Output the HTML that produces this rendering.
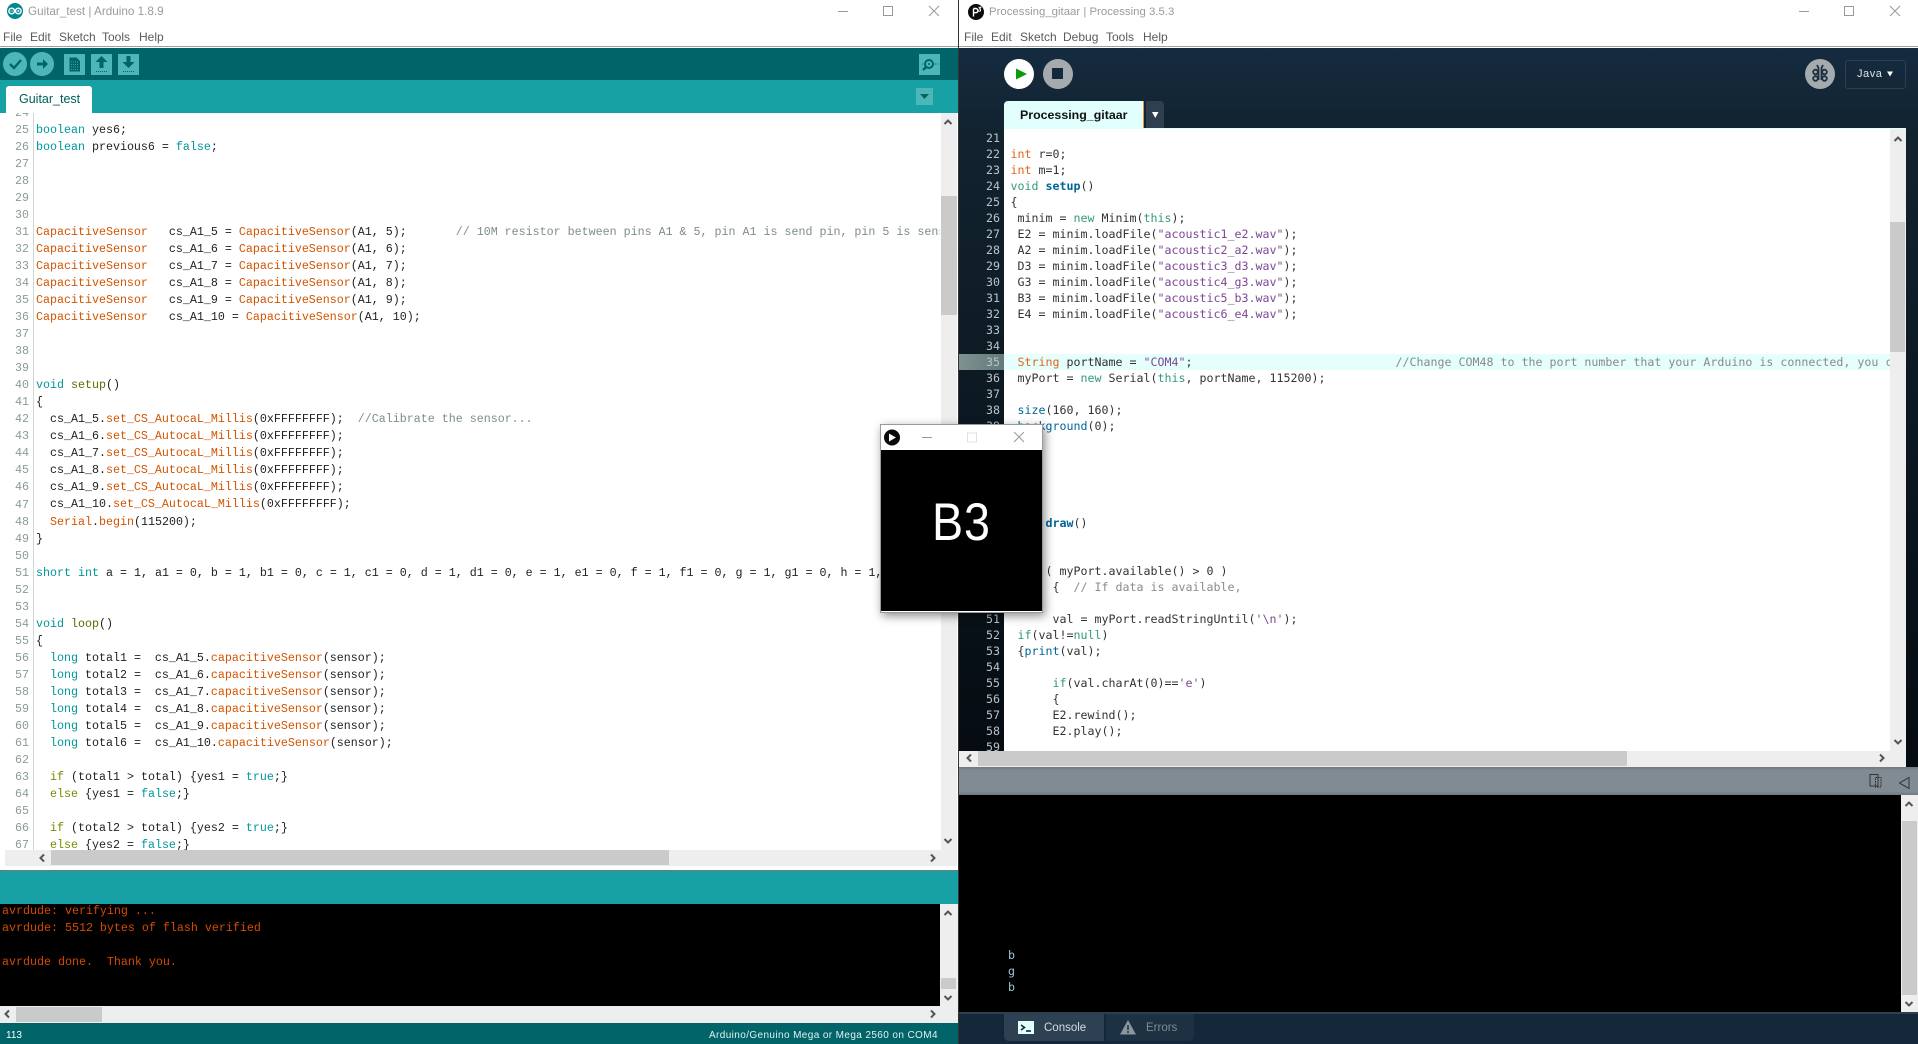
<!DOCTYPE html>
<html><head><meta charset="utf-8"><style>
html,body{margin:0;padding:0;width:1918px;height:1044px;overflow:hidden;background:#fff}
body{position:relative;font-family:"Liberation Sans",sans-serif}
div,span,pre,svg{position:absolute;margin:0}
pre span,pre{white-space:pre}
pre span{position:static}
.t{color:#9b9b9b;font-size:11.7px;top:3px;line-height:18px;white-space:nowrap}
.m{color:#5a5a5a;font-size:12px;top:28px;line-height:18px;white-space:nowrap}
.a{font:11.67px/17px "Liberation Mono",monospace;color:#222}
.p{font:11.63px/16px "DejaVu Sans Mono",monospace;color:#333}
.ak{color:#00979C}.ao{color:#D35400}.ag{color:#5E6D03}.ai{color:#728E00}.ac{color:#7f8c8d}
.pk{color:#33997E}.pi{color:#E2661A}.pb{color:#006699}.pf{color:#006699;font-weight:bold}.ps{color:#7D4793}.pc{color:#8a8a8a}
</style></head><body>

<!-- ARDUINO WINDOW -->
<div style="left:0;top:0;width:958px;height:1044px;background:#fff"></div>
<svg style="left:6px;top:2px" width="18" height="18" viewBox="0 0 18 18"><circle cx="9" cy="9" r="8" fill="#00878f"/><circle cx="5.7" cy="9" r="2.8" fill="none" stroke="#fff" stroke-width="1.4"/><circle cx="12.3" cy="9" r="2.8" fill="none" stroke="#fff" stroke-width="1.4"/><path d="M4.5 9h2.4M11 9h2.6M12.3 7.8v2.4" stroke="#fff" stroke-width=".8"/></svg>
<div class="t" style="left:28px">Guitar_test | Arduino 1.8.9</div>
<div class="m" style="left:3px">File</div><div class="m" style="left:30px">Edit</div><div class="m" style="left:59px">Sketch</div><div class="m" style="left:102px">Tools</div><div class="m" style="left:139px">Help</div>
<div style="left:0;top:46px;width:958px;height:1px;background:#a0a0a0"></div>
<div style="left:0;top:48px;width:958px;height:32px;background:#006468"></div>
<div style="left:0;top:80px;width:958px;height:33px;background:#17A1A5"></div>
<div style="left:6px;top:86px;width:86px;height:27px;background:#fff;border-radius:3px 3px 0 0"></div>
<div style="left:19px;top:91px;color:#005c5f;font-size:12.5px;line-height:17px">Guitar_test</div>
<div style="left:919px;top:54px;width:21px;height:21px;background:#4DB6B9"></div>
<div style="left:916px;top:88px;width:17px;height:17px;background:#4DB6B9"></div>
<div style="left:64px;top:54px;width:21px;height:21px;background:#4DB6B9"></div>
<div style="left:91px;top:54px;width:21px;height:21px;background:#4DB6B9"></div>
<div style="left:118px;top:54px;width:21px;height:21px;background:#4DB6B9"></div>
<div style="left:3px;top:52px;width:24px;height:24px;border-radius:50%;background:#4DB6B9"></div>
<div style="left:30px;top:52px;width:24px;height:24px;border-radius:50%;background:#4DB6B9"></div>

<!-- Arduino editor -->
<div style="left:33px;top:113px;width:1px;height:737px;background:#d4d4d4"></div>
<pre class="a" style="left:0;top:113px;width:29px;height:737px;overflow:hidden;text-align:right;color:#8a9a9b;line-height:17.02px"><span style="display:block;margin-top:-7.87px">24
25
26
27
28
29
30
31
32
33
34
35
36
37
38
39
40
41
42
43
44
45
46
47
48
49
50
51
52
53
54
55
56
57
58
59
60
61
62
63
64
65
66
67</span></pre>
<pre class="a" style="left:36px;top:113px;width:904px;height:737px;overflow:hidden;line-height:17.02px"><span style="display:block;margin-top:9.15px"><span class="ak">boolean</span> yes6;
<span class="ak">boolean</span> previous6 = <span class="ak">false</span>;




<span class="ao">CapacitiveSensor</span>   cs_A1_5 = <span class="ao">CapacitiveSensor</span>(A1, 5);       <span class="ac">// 10M resistor between pins A1 &amp; 5, pin A1 is send pin, pin 5 is sensor pin</span>
<span class="ao">CapacitiveSensor</span>   cs_A1_6 = <span class="ao">CapacitiveSensor</span>(A1, 6);
<span class="ao">CapacitiveSensor</span>   cs_A1_7 = <span class="ao">CapacitiveSensor</span>(A1, 7);
<span class="ao">CapacitiveSensor</span>   cs_A1_8 = <span class="ao">CapacitiveSensor</span>(A1, 8);
<span class="ao">CapacitiveSensor</span>   cs_A1_9 = <span class="ao">CapacitiveSensor</span>(A1, 9);
<span class="ao">CapacitiveSensor</span>   cs_A1_10 = <span class="ao">CapacitiveSensor</span>(A1, 10);



<span class="ak">void</span> <span class="ag">setup</span>()
{
  cs_A1_5.<span class="ao">set_CS_AutocaL_Millis</span>(0xFFFFFFFF);  <span class="ac">//Calibrate the sensor...</span>
  cs_A1_6.<span class="ao">set_CS_AutocaL_Millis</span>(0xFFFFFFFF);
  cs_A1_7.<span class="ao">set_CS_AutocaL_Millis</span>(0xFFFFFFFF);
  cs_A1_8.<span class="ao">set_CS_AutocaL_Millis</span>(0xFFFFFFFF);
  cs_A1_9.<span class="ao">set_CS_AutocaL_Millis</span>(0xFFFFFFFF);
  cs_A1_10.<span class="ao">set_CS_AutocaL_Millis</span>(0xFFFFFFFF);
  <span class="ao">Serial</span>.<span class="ao">begin</span>(115200);
}

<span class="ak">short</span> <span class="ak">int</span> a = 1, a1 = 0, b = 1, b1 = 0, c = 1, c1 = 0, d = 1, d1 = 0, e = 1, e1 = 0, f = 1, f1 = 0, g = 1, g1 = 0, h = 1, h1 = 0;


<span class="ak">void</span> <span class="ag">loop</span>()
{
  <span class="ak">long</span> total1 =  cs_A1_5.<span class="ao">capacitiveSensor</span>(sensor);
  <span class="ak">long</span> total2 =  cs_A1_6.<span class="ao">capacitiveSensor</span>(sensor);
  <span class="ak">long</span> total3 =  cs_A1_7.<span class="ao">capacitiveSensor</span>(sensor);
  <span class="ak">long</span> total4 =  cs_A1_8.<span class="ao">capacitiveSensor</span>(sensor);
  <span class="ak">long</span> total5 =  cs_A1_9.<span class="ao">capacitiveSensor</span>(sensor);
  <span class="ak">long</span> total6 =  cs_A1_10.<span class="ao">capacitiveSensor</span>(sensor);

  <span class="ai">if</span> (total1 &gt; total) {yes1 = <span class="ak">true</span>;}
  <span class="ai">else</span> {yes1 = <span class="ak">false</span>;}

  <span class="ai">if</span> (total2 &gt; total) {yes2 = <span class="ak">true</span>;}
  <span class="ai">else</span> {yes2 = <span class="ak">false</span>;}</span></pre>
<!-- Arduino editor scrollbars -->
<div style="left:941px;top:113px;width:16px;height:737px;background:#eee"></div>
<div style="left:941px;top:196px;width:16px;height:119px;background:#cacaca"></div>
<div style="left:5px;top:850px;width:952px;height:16px;background:#eee"></div>
<div style="left:51px;top:850px;width:618px;height:15px;background:#cacaca"></div>
<div style="left:0;top:870px;width:958px;height:1px;background:#777"></div>
<div style="left:0;top:871px;width:958px;height:33px;background:#17A1A5"></div>
<div style="left:0;top:904px;width:940px;height:102px;background:#000"></div>
<pre class="a" style="left:2px;top:903px;color:#D64A00">avrdude: verifying ...
avrdude: 5512 bytes of flash verified

avrdude done.  Thank you.</pre>
<div style="left:940px;top:904px;width:18px;height:102px;background:#eee"></div>
<div style="left:941px;top:978px;width:15px;height:11px;background:#cacaca"></div>
<div style="left:0;top:1006px;width:958px;height:17px;background:#eee"></div>
<div style="left:16px;top:1007px;width:86px;height:15px;background:#cacaca"></div>
<div style="left:0;top:1023px;width:958px;height:21px;background:#006468"></div>
<div style="left:6px;top:1028px;color:#fff;font-size:10px;line-height:16px">113</div>
<div style="left:709px;top:1028px;color:#e4f0f0;font-size:10px;line-height:16px;letter-spacing:.39px;white-space:nowrap">Arduino/Genuino Mega or Mega 2560 on COM4</div>

<!-- PROCESSING WINDOW -->
<div style="left:958px;top:0;width:1px;height:1044px;background:#333"></div>
<div style="left:959px;top:0;width:959px;height:47px;background:#fff"></div>
<svg style="left:967px;top:3px" width="18" height="18" viewBox="0 0 18 18"><circle cx="9" cy="9" r="8" fill="#0a0a0a"/><path d="M6.5 5.5v8M6.5 5.5h2.3a2 2 0 0 1 0 4.2H6.5" fill="none" stroke="#fff" stroke-width="1.4"/><path d="M11.5 4.3h2.3l-1.3 1.6a1.2 1.2 0 1 1-1.2 1.7" fill="none" stroke="#fff" stroke-width="1"/></svg>
<div class="t" style="left:989px;font-size:11.4px">Processing_gitaar | Processing 3.5.3</div>
<div class="m" style="left:964px">File</div><div class="m" style="left:991px">Edit</div><div class="m" style="left:1020px">Sketch</div><div class="m" style="left:1063px">Debug</div><div class="m" style="left:1106px">Tools</div><div class="m" style="left:1143px">Help</div>
<div style="left:959px;top:46px;width:959px;height:1px;background:#a0a0a0"></div>
<div style="left:959px;top:48px;width:959px;height:720px;background:linear-gradient(#152b40 0,#12232f 12%,#050b11 100%)"></div>
<div style="left:1004px;top:101px;width:139px;height:27px;background:#E0FFFD;border-radius:4px 0 0 0"></div>
<div style="left:1143px;top:101px;width:1px;height:27px;background:#e8943a"></div>
<div style="left:1146px;top:101px;width:18px;height:27px;background:#2E4050;border-radius:0 4px 0 0"></div>
<div style="left:1020px;top:106px;color:#111;font-size:12.4px;font-weight:bold;line-height:18px">Processing_gitaar</div>
<div style="left:1004px;top:128px;width:902px;height:623px;background:#fff"></div>
<div style="left:1004px;top:128px;width:902px;height:1px;background:#E0FFFD"></div>
<div style="left:959px;top:354px;width:45px;height:16px;background:linear-gradient(90deg,#7d9291,#64797a)"></div>
<div style="left:1004px;top:354px;width:886px;height:16px;background:#E5FFFC"></div>
<pre class="p" style="left:960px;top:130px;width:40px;height:621px;overflow:hidden;text-align:right;color:#b8c4c8;line-height:16.02px;padding-top:.13px">21
22
23
24
25
26
27
28
29
30
31
32
33
34
35
36
37
38
39
40
41
42
43
44
45
46
47
48
49
50
51
52
53
54
55
56
57
58
59</pre>
<pre class="p" style="left:1010.500px;top:130px;width:879px;height:621px;overflow:hidden;line-height:16.02px;padding-top:.13px">

<span class="pi">int</span> r=0;
<span class="pi">int</span> m=1;
<span class="pk">void</span> <span class="pf">setup</span>()
{
 minim = <span class="pk">new</span> Minim(<span class="pk">this</span>);
 E2 = minim.loadFile(<span class="ps">"acoustic1_e2.wav"</span>);
 A2 = minim.loadFile(<span class="ps">"acoustic2_a2.wav"</span>);
 D3 = minim.loadFile(<span class="ps">"acoustic3_d3.wav"</span>);
 G3 = minim.loadFile(<span class="ps">"acoustic4_g3.wav"</span>);
 B3 = minim.loadFile(<span class="ps">"acoustic5_b3.wav"</span>);
 E4 = minim.loadFile(<span class="ps">"acoustic6_e4.wav"</span>);


 <span class="pi">String</span> portName = <span class="ps">"COM4"</span>;                             <span class="pc">//Change COM48 to the port number that your Arduino is connected, you can</span>
 myPort = <span class="pk">new</span> Serial(<span class="pk">this</span>, portName, 115200);

 <span class="pb">size</span>(160, 160);
 <span class="pb">background</span>(0);
}




<span class="pk">void</span> <span class="pf">draw</span>()
{

  <span class="pk">if</span> ( myPort.available() &gt; 0 )
      {  <span class="pc">// If data is available,</span>

      val = myPort.readStringUntil(<span class="ps">'\n'</span>);
 <span class="pk">if</span>(val!=<span class="pk">null</span>)
 {<span class="pb">print</span>(val);

      <span class="pk">if</span>(val.charAt(0)==<span class="ps">'e'</span>)
      {
      E2.rewind();
      E2.play();
</pre>
<div style="left:1890px;top:129px;width:16px;height:622px;background:#eee"></div>
<div style="left:1890px;top:222px;width:15px;height:130px;background:#cacaca"></div>
<div style="left:959px;top:751px;width:947px;height:16px;background:#eee"></div>
<div style="left:978px;top:751px;width:649px;height:15px;background:#cacaca"></div>
<div style="left:959px;top:767px;width:959px;height:28px;background:linear-gradient(#6d7983 0,#808b93 12%,#808b93 88%,#6d7983 100%)"></div>
<div style="left:959px;top:795px;width:942px;height:217px;background:#000"></div>
<div style="left:1901px;top:795px;width:17px;height:217px;background:#eee"></div>
<div style="left:1902px;top:821px;width:15px;height:174px;background:#cacaca"></div>
<pre style="left:1008px;top:947px;color:#9cc4d4;font:11.6px/16px 'DejaVu Sans Mono',monospace">b
g
b</pre>
<div style="left:959px;top:1012px;width:959px;height:32px;background:#142839"></div>
<div style="left:959px;top:1012px;width:959px;height:2px;background:#2c4050"></div>
<div style="left:1004px;top:1014px;width:100px;height:27px;background:#2E4152;border-radius:0 0 0 5px"></div>
<div style="left:1106px;top:1014px;width:88px;height:27px;background:#1c3243;border-radius:0 0 5px 0"></div>
<div style="left:1018px;top:1021px;width:16px;height:13px;background:#E0FFFD"></div>
<div style="left:1044px;top:1019px;color:#d3dde0;font-size:11.5px;line-height:18px">Console</div>
<div style="left:1146px;top:1019px;color:#7d8b94;font-size:11.5px;line-height:18px">Errors</div>
<div style="left:1805px;top:59px;width:30px;height:30px;border-radius:50%;background:#a5aaaf"></div>
<div style="left:1845px;top:60px;width:59px;height:27px;border:1px solid #2E4050;border-radius:3px"></div>
<div style="left:1857px;top:66px;color:#dfe3e6;font-size:11px;line-height:17px;letter-spacing:.05em">Java</div>
<div style="left:1004px;top:59px;width:30px;height:30px;border-radius:50%;background:#fff"></div>
<div style="left:1043px;top:59px;width:30px;height:30px;border-radius:50%;background:#a5aaaf"></div>
<div style="left:1052px;top:68px;width:11px;height:11px;background:#14293b"></div>

<!-- ICON OVERLAY -->
<svg style="left:0;top:0" width="1918" height="1044" viewBox="0 0 1918 1044" fill="none">
<!-- window controls -->
<g stroke="#999" stroke-width="1">
<path d="M838 11.5h10M883.500 6.500h9v9h-9zM929 6l10 10M939 6l-10 10"/>
<path d="M1799 11.500h10M1844.500 6.500h9v9h-9zM1890 6l10 10M1900 6l-10 10"/>
</g>
<!-- arduino toolbar -->
<path d="M10 64l4 4 7-8" stroke="#006468" stroke-width="2.400"/>
<path d="M37 64h7" stroke="#006468" stroke-width="3"/><path d="M43 59l5 5-5 5z" fill="#006468"/>
<path d="M69.500 57.500h7l3.500 3.500v10.500h-10.500z" fill="#006468"/>
<path d="M71 62h7M71 64.500h7M71 67h7M71 69.500h7" stroke="#4DB6B9" stroke-width=".8" stroke-dasharray="1 1"/>
<path d="M101.500 56l-6 6h4v6h4v-6h4z" fill="#006468"/><path d="M96 71.500h11" stroke="#006468" stroke-dasharray="1 1"/>
<path d="M128.500 68l-6-6h4v-6h4v6h4z" fill="#006468"/><path d="M123 71.500h11" stroke="#006468" stroke-dasharray="1 1"/>
<circle cx="929" cy="64" r="4" stroke="#006468" stroke-width="2"/><circle cx="929" cy="64" r="1" fill="#006468"/><path d="M926 67l-3 3" stroke="#006468" stroke-width="2.500"/><path d="M922 64h1M935 64h3" stroke="#006468" stroke-dasharray="1 1"/>
<path d="M920 94h9l-4.500 5z" fill="#006468"/>
<!-- scrollbar arrows -->
<g stroke="#555" stroke-width="2">
<path d="M944.500 124l3.500-3.500 3.500 3.500M944.500 839l3.500 3.500 3.500-3.500M44 854.500l-3.500 3.500 3.500 3.500M931 854.500l3.500 3.500-3.500 3.500"/>
<path d="M944.500 915l3.500-3.500 3.500 3.500M944.500 996l3.500 3.500 3.500-3.500M9 1010.500l-3.500 3.500 3.500 3.500M931 1010.500l3.500 3.500-3.500 3.500"/>
<path d="M1894.500 141l3.500-3.500 3.500 3.500M1894.500 740l3.500 3.500 3.500-3.500M971 754.500l-3.500 3.500 3.500 3.500M1880 754.500l3.500 3.500-3.500 3.500"/>
<path d="M1905.500 806l3.500-3.500 3.500 3.500M1905.500 1002l3.500 3.500 3.500-3.500"/>
</g>
<!-- processing toolbar -->
<path d="M1016 69l11 5.500-11 5.500z" transform="translate(0 -.500)" fill="#0a9a0a"/>
<path d="M1152 112h6.500l-3.250 6z" fill="#fff"/>
<path d="M1887 71.500h6l-3 5z" fill="#fff"/>
<g stroke="#1c3040" stroke-width="1.800"><path d="M1817 65l1.500 3v12M1823 65l-1.500 3v12"/><circle cx="1815.500" cy="72" r="2.300"/><circle cx="1815.500" cy="78.500" r="2.300"/><circle cx="1824.500" cy="72" r="2.300"/><circle cx="1824.500" cy="78.500" r="2.300"/></g>
<!-- console header icons -->
<path d="M1870 774.500h8v11.500h-8z" stroke="#333" stroke-width="1"/><path d="M1875.500 777.500h5.500v9.500h-5.500z" stroke="#222" stroke-dasharray="1.500 1"/>
<path d="M1899.500 783l9.500-5.500v11z" stroke="#333" stroke-width="1"/>
<!-- bottom tabs -->
<path d="M1021 1025l3.500 2.500-3.500 2.500" stroke="#142839" stroke-width="1.600"/><path d="M1026 1031h5" stroke="#142839" stroke-width="1.600"/>
<path d="M1128 1020l8 14.500h-16z" fill="#8a979f"/><path d="M1128 1025v5M1128 1031v2" stroke="#1c3243" stroke-width="1.500"/>
</svg>

<!-- SKETCH POPUP -->
<div style="left:880px;top:424px;width:161px;height:187px;border:1px solid #9a9a9a;background:#fff;box-shadow:2px 3px 9px rgba(0,0,0,.45)"></div>
<div style="left:881px;top:450px;width:161px;height:161px;background:#000"></div>
<svg style="left:881px;top:425px" width="161" height="25" viewBox="0 0 161 25" fill="none"><circle cx="11" cy="12.500" r="8" fill="#0a0a0a"/><path d="M8 8.500l7 4-7 4z" fill="#fff"/><path d="M41 12.500h10" stroke="#999"/><path d="M86.500 8h9v9h-9z" stroke="#e0e0e0"/><path d="M133 7l10 10M143 7l-10 10" stroke="#999"/></svg>
<div style="left:932px;top:493px;color:#fff;font-size:53px;line-height:60px;white-space:nowrap;letter-spacing:1px;transform:scaleX(.88);transform-origin:left top">B3</div>
</body></html>
